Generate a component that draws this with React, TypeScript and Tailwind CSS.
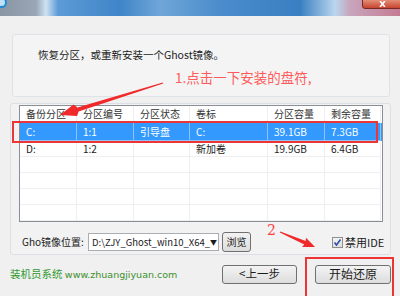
import React from 'react'

const cols = ['备份分区', '分区编号', '分区状态', '卷标', '分区容量', '剩余容量']

const rows = [
  ['C:', '1:1', '引导盘', 'C:', '39.1GB', '7.3GB'],
  ['D:', '1:2', '', '新加卷', '19.9GB', '6.4GB'],
]

function Row({ cells, selected, head }: { cells: string[]; selected?: boolean; head?: boolean }) {
  return (
    <div
      className={
        'grid grid-cols-[57px_57px_56px_78px_57px_56px] ' +
        (head ? 'h-[17px] text-[#333] ' : selected ? 'h-[18px] ' : 'h-[16px] ') +
        (selected ? 'bg-[#3399ff] text-white' : 'text-[#222]')
      }
    >
      {cells.map((c, i) => (
        <div
          key={i}
          className={
            'flex items-center pl-[6px] border-r border-b truncate ' +
            (selected ? 'border-[#8fc3f7]' : 'border-[#efefef]')
          }
        >
          {c}
        </div>
      ))}
    </div>
  )
}

export default function App() {
  const empty = ['', '', '', '', '', '']
  return (
    <div
      className="relative w-[400px] h-[296px] overflow-hidden bg-[#f0f0f0] text-[10px] leading-none text-[#1a1a1a]"
      style={{ fontFamily: '"Noto Sans CJK SC", "Liberation Sans", sans-serif' }}
    >
      {/* title bar */}
      <div className="relative h-[16px] bg-[linear-gradient(90deg,#8b95a3_0px,#98a6b6_36px,#cfe2f3_46px,#5d9bd6_58px,#3f85c8_120px,#6fa6d8_160px,#4a8ccc_220px,#3a7fc2_300px,#b9d6ee_335px,#c8a5bc_350px,#c47b93_400px)]">
        <div className="absolute left-[-4px] top-[-3px] w-[11px] h-[11px] rounded-full border-2 border-[#1e8ad8] bg-[#bfe0f7]" />
        <div className="absolute left-[362px] top-[-3px] w-[40px] h-[12px] rounded-[3px] border border-[#7a2a22] bg-[linear-gradient(180deg,#e9a089,#c9452f)]">
          <svg className="absolute left-[16px] top-[3px]" width="7" height="6" viewBox="0 0 7 6">
            <path d="M1 0 L6 6 M6 0 L1 6" stroke="#fff" strokeWidth="1.6" />
          </svg>
        </div>
      </div>

      {/* top panel */}
      <div className="ml-[12px] mt-[18px] w-[378px] h-[63px] rounded-[3px] border border-[#dfe3e8] bg-[#f4f4f4] pl-[25px] pt-[15px] text-[10.5px]">
        恢复分区，或重新安装一个Ghost镜像。
      </div>

      {/* group */}
      <div className="ml-[10px] mt-[6px] w-[381px] h-[152px] rounded-[3px] border border-[#dcdfe3] bg-[#f2f2f2]">
        <div className="ml-[8px] mt-[1px] w-[364px] h-[117px] border border-[#8a8e96] bg-white overflow-hidden">
          <Row cells={cols} head />
          <Row cells={rows[0]} selected />
          <Row cells={rows[1]} />
          <Row cells={empty} />
          <Row cells={empty} />
          <Row cells={empty} />
          <Row cells={empty} />
          <Row cells={empty} />
        </div>

        <div className="flex items-center mt-[10px] h-[20px]">
          <span className="ml-[11px] w-[66px]">Gho镜像位置:</span>
          <div className="w-[131px] h-[18px] border border-[#abadb3] bg-white flex items-center justify-between">
            <span className="pl-[3px] leading-[14px] whitespace-nowrap text-[9.5px]">D:\ZJY_Ghost_win10_X64_</span>
            <span className="text-[7px] mr-[3px]">▼</span>
          </div>
          <div className="ml-[3px] w-[29px] h-[20px] rounded-[3px] border border-[#707070] bg-[linear-gradient(180deg,#f2f2f2,#dcdcdc)] flex items-center justify-center">
            浏览
          </div>
          <div className="ml-[81px] w-[11px] h-[11px] border border-[#8f8f8f] bg-[linear-gradient(180deg,#f4f4f4,#dedede)] flex items-center justify-center">
            <svg width="9" height="9" viewBox="0 0 9 9">
              <path d="M1.5 4.5 L3.5 7 L7.5 1.5" fill="none" stroke="#2a4fa8" strokeWidth="1.6" />
            </svg>
          </div>
          <span className="ml-[2px] text-[11px]">禁用IDE</span>
        </div>
      </div>

      {/* footer */}
      <div className="flex items-center mt-[9px] h-[20px]">
        <span className="ml-[10px] w-[212px] text-[#2f9a2f] text-[10.5px] whitespace-nowrap">
          装机员系统 <span className="text-[#3c8f2c]" style={{ fontFamily: '"DejaVu Sans", sans-serif', fontSize: '9.5px' }}>www.zhuangjiyuan.com</span>
        </span>
        <div className="w-[75px] h-[19px] rounded-[3px] border border-[#707070] bg-[linear-gradient(180deg,#f3f3f3,#dddddd)] flex items-center justify-center text-[11.5px]">
          &lt;上一步
        </div>
        <div className="ml-[18px] w-[76px] h-[19px] rounded-[3px] border border-[#707070] bg-[linear-gradient(180deg,#f3f3f3,#dddddd)] flex items-center justify-center text-[12px]">
          开始还原
        </div>
      </div>

      {/* annotations */}
      <div className="absolute left-[12px] top-[121px] w-[366px] h-[22px] border-2 border-[#ee3535]" />
      <div className="absolute left-[305px] top-[257px] w-[89px] h-[42px] border-2 border-[#ee3535]" />
      <div className="absolute left-[175px] top-[71px] text-[13.5px] text-[#ff5a5a] whitespace-nowrap">1.点击一下安装的盘符,</div>
      <div className="absolute left-[267px] top-[223px] text-[14px] text-[#ff4040]" style={{ fontFamily: '"DejaVu Serif", serif' }}>2</div>
      <svg className="absolute left-0 top-0" width="400" height="296" viewBox="0 0 400 296">
        <polygon
          points="163.2,83.6 78.6,111.5 77.1,115.9 60,115 73.5,104.5 77.4,107.6 162.8,82.4"
          fill="#f02a2a"
        />
        <polygon
          points="279.8,232.6 304.3,244.4 302,246.9 315,247 306,237.7 305.7,241 280.2,231.4"
          fill="#f02a2a"
        />
      </svg>
    </div>
  )
}
